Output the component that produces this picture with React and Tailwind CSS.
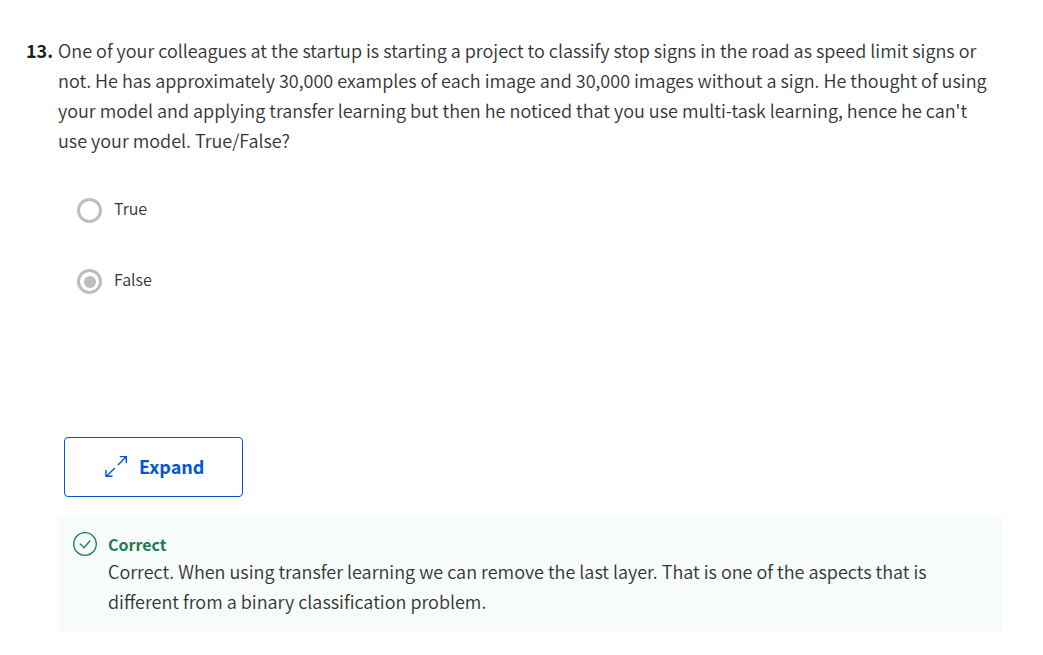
import { useState } from "react";

function ExpandIcon() {
  return (
    <svg
      className="size-[22px] shrink-0"
      viewBox="0 0 22 22"
      fill="none"
      stroke="currentColor"
      strokeWidth="1.4"
      aria-hidden="true"
    >
      <path d="M13 9.9 21.1 1.8M14.8 1.6h6.5v6.5M9.9 13.1 1.2 21.4M1 15v6.3h6.5" />
    </svg>
  );
}

function CheckIcon() {
  return (
    <svg
      className="size-6 shrink-0"
      viewBox="0 0 24 24"
      fill="none"
      stroke="currentColor"
      strokeWidth="1.3"
      aria-hidden="true"
    >
      <circle cx="12" cy="12" r="11.3" />
      <path d="M6.9 11.6 11 15.7 17.2 8.5" />
    </svg>
  );
}

function Option({ id, label, checked, onSelect }) {
  return (
    <div className="flex items-start gap-3">
      <input
        id={id}
        type="radio"
        name="answer"
        checked={checked}
        onChange={onSelect}
        className="grid size-[25px] shrink-0 appearance-none place-items-center rounded-full border-[3px] border-[#bdbdbd] before:size-3 before:rounded-full checked:before:bg-[#bdbdbd]"
      />
      <label htmlFor={id} className="text-base leading-5">
        {label}
      </label>
    </div>
  );
}

export default function App() {
  const [answer, setAnswer] = useState("False");

  return (
    <main className="bg-white pt-[35px] pr-10 pb-6 pl-[26px] font-['Noto_Sans_CJK_SC','Noto_Sans',sans-serif] text-[#333333]">
      <section className="flex text-lg leading-[30px]">
        <span className="w-8 shrink-0 font-bold text-[#1f1f1f]">13.</span>
        <p className="min-w-0 flex-1 pr-2 font-[350]">
          One of your colleagues at the startup is starting a project to classify stop signs in the
          road as speed limit signs or not. He has approximately 30,000 examples of each image and
          30,000 images without a sign. He thought of using your model and applying transfer
          learning but then he noticed that you use multi-task learning, hence he can't use your
          model. True/False?
        </p>
      </section>

      <fieldset className="mt-[43px] ml-[51px] flex flex-col gap-[46px] font-[350]">
        {["True", "False"].map((value) => (
          <Option
            key={value}
            id={"answer-" + value}
            label={value}
            checked={answer === value}
            onSelect={() => setAnswer(value)}
          />
        ))}
      </fieldset>

      <button
        type="button"
        className="mt-[143px] ml-[38px] flex items-center gap-3 rounded border border-[#0056d2] pt-4 pr-[38px] pb-[18px] pl-10 text-lg leading-6 font-bold text-[#0056d2]"
      >
        <ExpandIcon />
        Expand
      </button>

      <section className="mt-5 ml-8 flex gap-[11px] bg-[#f7fbfa] pt-[15px] pr-4 pb-4 pl-[15px]">
        <span className="text-[#1d7c50]">
          <CheckIcon />
        </span>
        <div className="min-w-0 flex-1">
          <h2 className="text-base leading-6 font-bold text-[#1d7c50]">Correct</h2>
          <p className="pr-8 text-lg leading-[30px] font-[350]">
            Correct. When using transfer learning we can remove the last layer. That is one of the
            aspects that is different from a binary classification problem.
          </p>
        </div>
      </section>
    </main>
  );
}
